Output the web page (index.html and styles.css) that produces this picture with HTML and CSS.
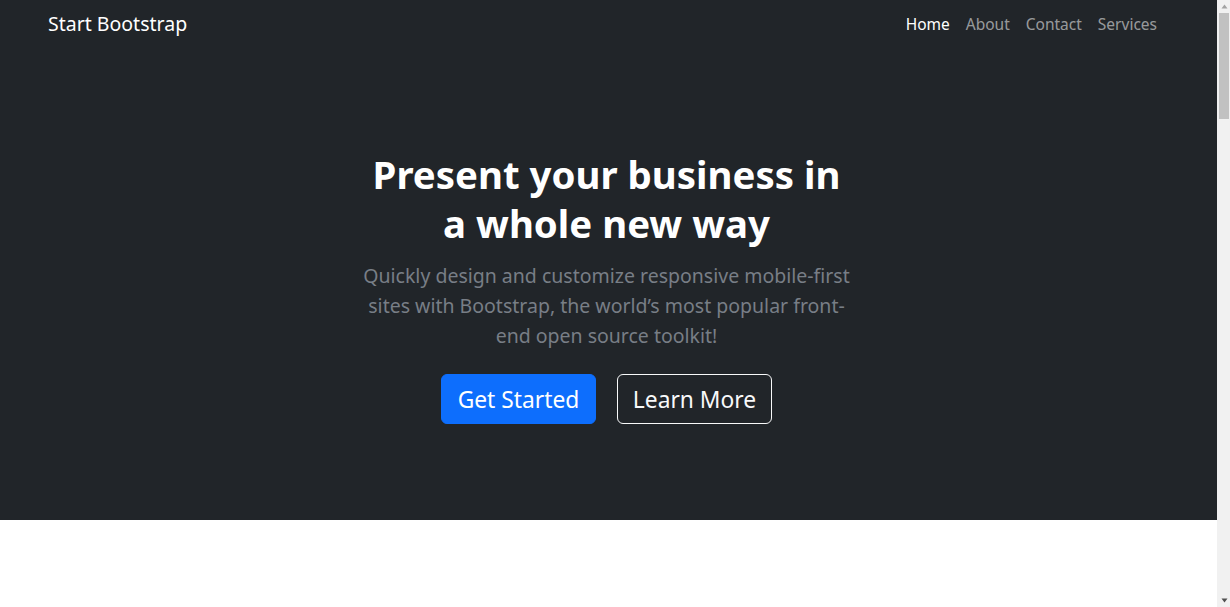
FILE: index.html
```html
<!DOCTYPE html>
<html lang="en">
<head>
<meta charset="utf-8">
<title>Business Frontpage - Start Bootstrap Template</title>
<link rel="stylesheet" href="styles.css">
</head>
<body>
<div class="page">
  <nav class="navbar">
    <a class="brand" href="#">Start Bootstrap</a>
    <ul class="nav-links">
      <li><a class="nav-link active" href="#">Home</a></li>
      <li><a class="nav-link" href="#">About</a></li>
      <li><a class="nav-link" href="#">Contact</a></li>
      <li><a class="nav-link" href="#">Services</a></li>
    </ul>
  </nav>
  <header class="hero">
    <div class="hero-inner">
      <h1 class="hero-title">Present your business in a whole new way</h1>
      <p class="hero-lead">Quickly design and customize responsive mobile-first sites with Bootstrap, the world’s most popular front-end open source toolkit!</p>
      <div class="hero-actions">
        <a class="btn btn-primary" href="#features">Get Started</a>
        <a class="btn btn-outline" href="#">Learn More</a>
      </div>
    </div>
  </header>
  <section class="features" id="features"></section>
</div>
<div class="scrollbar" aria-hidden="true">
  <svg class="sb-arrow" width="13" height="13" viewBox="0 0 13 13"><path d="M4.5 8.5 L10.5 8.5 L7.5 4.5 Z" fill="#a3a3a3"/></svg>
  <div class="sb-track"><div class="sb-thumb"></div></div>
  <svg class="sb-arrow" width="13" height="13" viewBox="0 0 13 13"><path d="M4.5 4.5 L10.5 4.5 L7.5 8.5 Z" fill="#505050"/></svg>
</div>
</body>
</html>
```
FILE: styles.css
```css
* { box-sizing: border-box; }
html, body { margin: 0; padding: 0; }
body {
  font-family: "Noto Sans", "Open Sans", sans-serif;
  background: #fff;
  color: #212529;
  height: 607px;
  overflow: hidden;
  display: flex;
}
a { text-decoration: none; }

.page {
  flex: 1;
  min-width: 0;
  display: flex;
  flex-direction: column;
}

.navbar {
  background: #212529;
  height: 48px;
  padding: 0 52px 0 48px;
  display: flex;
  justify-content: space-between;
  align-items: flex-start;
}
.brand {
  color: #fff;
  font-size: 19.5px;
  line-height: 30px;
  margin-top: 9px;
}
.nav-links {
  list-style: none;
  margin: 12px 0 0;
  padding: 0;
  display: flex;
}
.nav-link {
  display: block;
  padding: 0 8px;
  font-size: 15.5px;
  line-height: 24px;
  color: rgba(255, 255, 255, 0.55);
}
.nav-link.active { color: #fff; }

.hero {
  background: #212529;
  padding: 102px 4px 96px 0;
}
.hero-inner {
  width: 494px;
  margin: 0 auto;
  text-align: center;
}
.hero-title {
  margin: 0 0 13px;
  font-size: 38.4px;
  line-height: 49px;
  font-weight: 700;
  color: #fff;
}
.hero-lead {
  margin: 0 0 23px;
  font-size: 19.5px;
  line-height: 30px;
  color: #787e86;
}
.hero-actions {
  display: flex;
  justify-content: center;
  gap: 21px;
}
.btn {
  display: block;
  width: 155px;
  height: 50px;
  padding: 10px 0 8px;
  border: 1px solid transparent;
  border-radius: 6px;
  font-size: 22.8px;
  line-height: 30px;
  text-align: center;
}
.btn-primary {
  background: #0d6efd;
  border-color: #0d6efd;
  color: #fff;
}
.btn-outline {
  background: transparent;
  border-color: #f8f9fa;
  color: #f8f9fa;
}

.features {
  flex: 1;
  background: #fff;
}

.scrollbar {
  width: 13px;
  flex: none;
  background: #f1f1f1;
  display: flex;
  flex-direction: column;
}
.sb-arrow { display: block; flex: none; }
.sb-track {
  flex: 1;
  padding: 0 1px 0 2px;
}
.sb-thumb {
  height: 106px;
  background: #c1c1c1;
}
```
